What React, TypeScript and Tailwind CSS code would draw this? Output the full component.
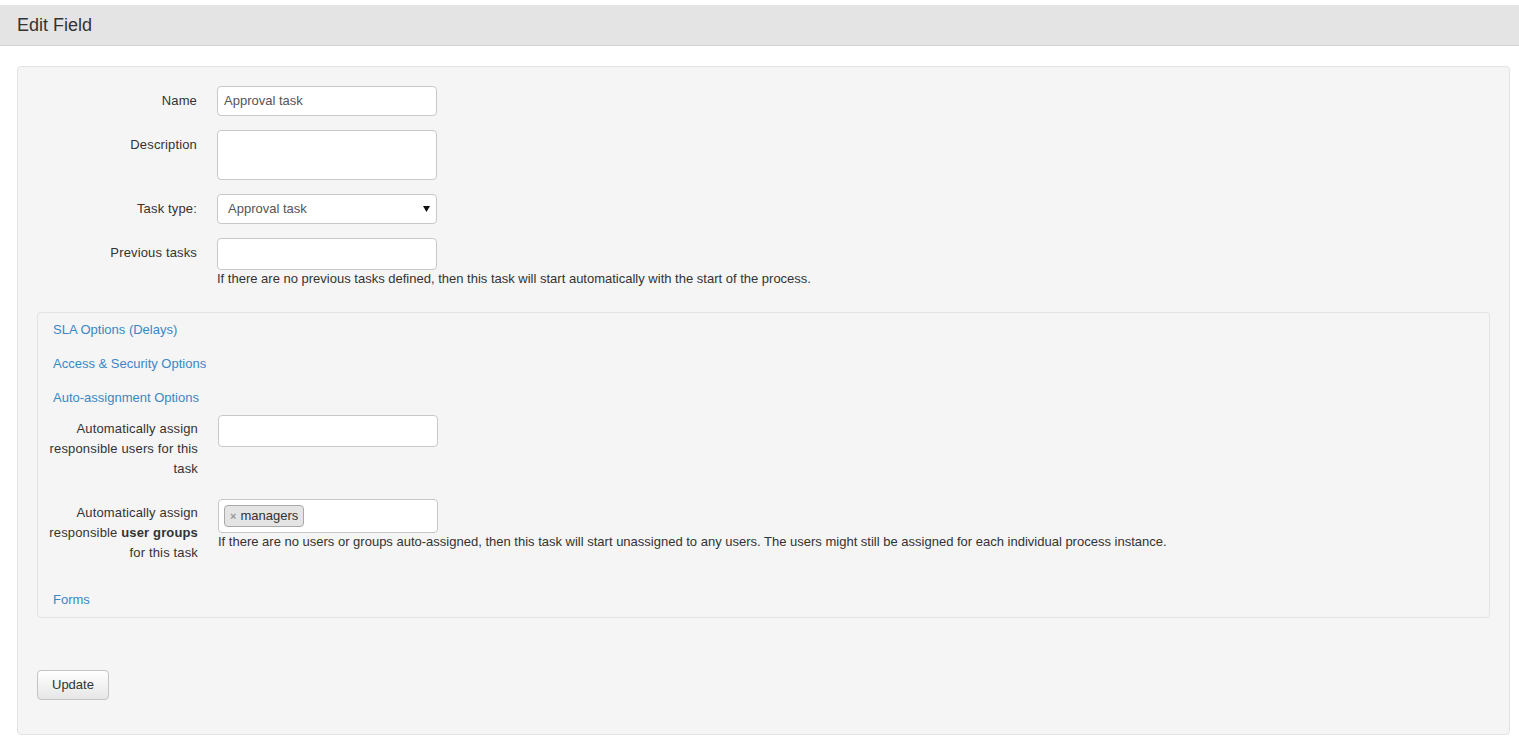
import React from 'react';

const font = { fontFamily: '"Liberation Sans", Arial, sans-serif' };

const Label: React.FC<{ children: React.ReactNode; inner?: boolean }> = ({ children, inner }) => (
  <div
    className={
      inner
        ? 'w-[160px] shrink-0 pl-[8px] pt-[4px] text-right text-[13px] leading-[20px] tracking-[0.15px] text-[#333]'
        : 'w-[160px] shrink-0 pt-[5px] text-right text-[13px] leading-[20px] tracking-[0.15px] text-[#333]'
    }
  >
    {children}
  </div>
);

const TextBox: React.FC<{ h: string; value?: string }> = ({ h, value }) => (
  <div
    className={`${h} w-[220px] rounded-[4px] border border-[#c8c8c8] bg-white px-[6px] pt-[6px] text-[13px] leading-[16px] text-[#555]`}
  >
    {value}
  </div>
);

export default function App() {
  return (
    <div className="min-h-screen bg-white pt-[5px] text-[#333]" style={font}>
      {/* Header */}
      <div className="flex h-[41px] items-center border-b border-[#d4d4d4] bg-[#e4e4e4] px-[17px]">
        <h1 className="text-[18px] leading-[20px] text-[#333]">Edit Field</h1>
      </div>

      <div className="ml-[17px] mr-[9px] mt-[20px] rounded-[4px] border border-[#e3e3e3] bg-[#f5f5f5] px-[19px] pt-[19px] pb-[15px]">
        {/* Main fields */}
        <div className="flex flex-col gap-[14px]">
          <div className="flex gap-[20px]">
            <Label>Name</Label>
            <div className="h-[30px] w-[220px] rounded-[4px] border border-[#c8c8c8] bg-white px-[6px] text-[13px] leading-[28px] text-[#555]">
              Approval task
            </div>
          </div>
          <div className="flex gap-[20px]">
            <Label>Description</Label>
            <TextBox h="h-[50px]" />
          </div>
          <div className="flex gap-[20px]">
            <Label>Task type:</Label>
            <div className="flex h-[30px] w-[220px] items-center justify-between rounded-[4px] border border-[#c8c8c8] bg-white pl-[10px] pr-[6px] text-[13px] text-[#555]">
              <span>Approval task</span>
              <svg width="7" height="6" viewBox="0 0 7 6">
                <path d="M0 0 L7 0 L3.5 6 Z" fill="#111" />
              </svg>
            </div>
          </div>
          <div className="flex gap-[20px]">
            <Label>Previous tasks</Label>
            <div className="flex flex-col">
              <TextBox h="h-[32px]" />
              <p className="whitespace-nowrap text-[13px] leading-[17px] text-[#333]">
                If there are no previous tasks defined, then this task will start automatically with the start of the process.
              </p>
            </div>
          </div>
        </div>

        {/* Options panel */}
        <div className="mt-[25px] rounded-[4px] border border-[#e3e3e3] bg-[#f5f5f5] pt-[7px] pb-[7px]">
          <div className="flex flex-col gap-[14px] pl-[15px] text-[13px] leading-[20px] text-[#3a87c6]">
            <a href="#">SLA Options (Delays)</a>
            <a href="#">Access &amp; Security Options</a>
            <a href="#">Auto-assignment Options</a>
          </div>

          <div className="mt-[7px] flex gap-[20px]">
            <Label inner>Automatically assign responsible users for this task</Label>
            <TextBox h="h-[32px]" />
          </div>

          <div className="mt-[20px] flex gap-[20px]">
            <Label inner>
              Automatically assign responsible <b className="font-bold">user groups</b> for this task
            </Label>
            <div className="flex flex-col">
              <div className="flex h-[34px] w-[220px] items-start rounded-[4px] border border-[#c8c8c8] bg-white pl-[5px] pt-[5px]">
                <span className="flex h-[22px] items-center gap-[4px] rounded-[4px] border border-[#aaa] bg-[#e4e4e4] px-[5px] text-[13px] text-[#333]">
                  <span className="text-[11px] font-bold text-[#999]">×</span>
                  managers
                </span>
              </div>
              <p className="whitespace-nowrap text-[13px] leading-[17px] text-[#333]">
                If there are no users or groups auto-assigned, then this task will start unassigned to any users. The users might still be assigned for each individual process instance.
              </p>
            </div>
          </div>

          <div className="mt-[27px] pl-[15px] text-[13px] leading-[20px] text-[#3a87c6]">
            <a href="#">Forms</a>
          </div>
        </div>

        <button className="mb-[19px] mt-[52px] h-[30px] rounded-[4px] border border-[#c4c4c4] bg-gradient-to-b from-white to-[#e6e6e6] px-[14px] text-[13px] text-[#333]">
          Update
        </button>
      </div>
    </div>
  );
}
